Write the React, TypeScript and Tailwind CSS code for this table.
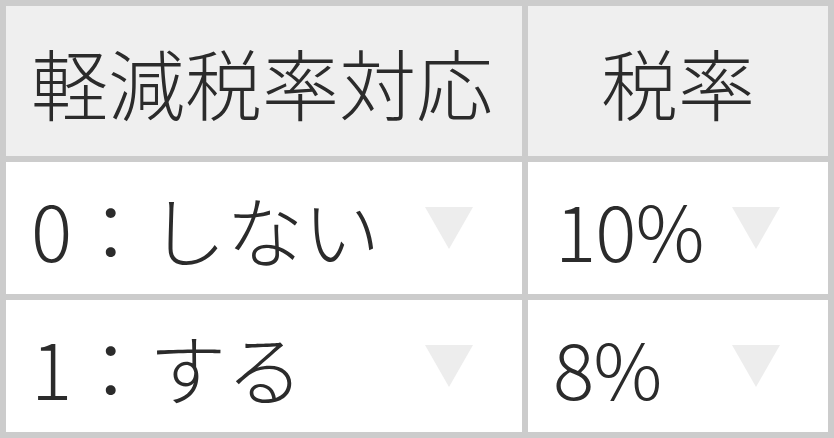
import React from "react";

const Tri = () => (
  <svg width="48" height="42" viewBox="0 0 48 42" className="shrink-0">
    <polygon points="0,0 48,0 24,42" fill="#ededed" />
  </svg>
);

export default function App() {
  const font = { fontFamily: '"Noto Sans CJK JP", "Noto Sans", sans-serif' };
  return (
    <div
      className="w-[834px] h-[438px] bg-[#cccccc] p-[6px] grid grid-cols-[516px_300px] grid-rows-[150px_132px_132px] gap-[6px] text-[#2b2b2b] text-[77px] leading-none font-light"
      style={font}
    >
      <div className="bg-[#efefef] flex items-center pl-[25px]">軽減税率対応</div>
      <div className="bg-[#efefef] flex items-center justify-center">税率</div>
      <div className="bg-white flex items-center justify-between pl-[25px] pr-[49px]">
        <span>0：しない</span>
        <Tri />
      </div>
      <div className="bg-white flex items-center justify-between pl-[27px] pr-[48px]">
        <span className="tracking-[-1px]">10%</span>
        <Tri />
      </div>
      <div className="bg-white flex items-center justify-between pl-[25px] pr-[49px]">
        <span>1：する</span>
        <Tri />
      </div>
      <div className="bg-white flex items-center justify-between pl-[25px] pr-[48px]">
        <span className="tracking-[-1px]">8%</span>
        <Tri />
      </div>
    </div>
  );
}
